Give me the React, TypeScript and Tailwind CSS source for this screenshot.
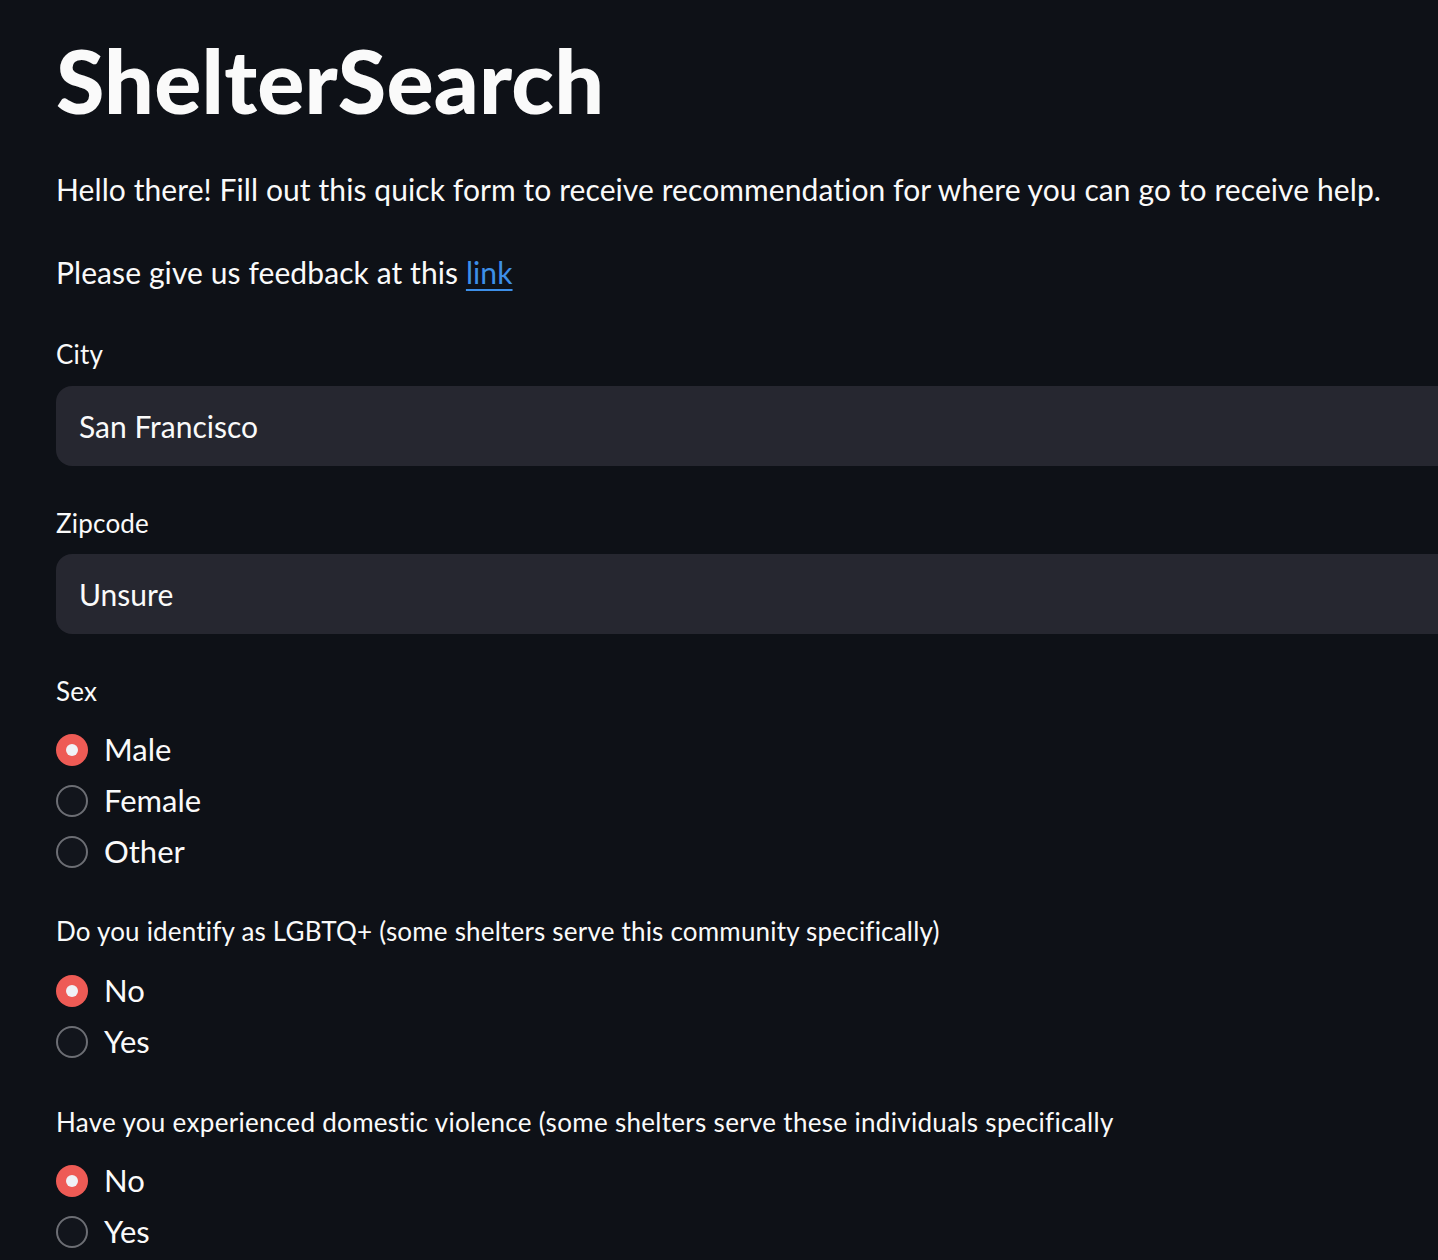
import React from "react";

const font = { fontFamily: "Lato, 'Noto Sans', sans-serif" };

function Radio({ label, checked }: { label: string; checked?: boolean }) {
  return (
    <div className="flex h-[51px] items-center">
      {checked ? (
        <div className="flex h-[32px] w-[32px] items-center justify-center rounded-full bg-[#ee5b55]">
          <div className="h-[12px] w-[12px] rounded-full bg-[#f0f2f6]" />
        </div>
      ) : (
        <div className="h-[32px] w-[32px] rounded-full border-2 border-[#6c6e74] bg-[#12151c]" />
      )}
      <span className="ml-[16px] text-[31px] leading-none text-[#fafafa]">{label}</span>
    </div>
  );
}

function Label({ children, className = "" }: { children: React.ReactNode; className?: string }) {
  return (
    <div className={`flex h-[36px] items-center text-[26px] leading-none text-[#fafafa] ${className}`}>{children}</div>
  );
}

function Input({ value, className = "" }: { value: string; className?: string }) {
  return (
    <div className={`-mr-[40px] flex h-[80px] items-center rounded-[16px] bg-[#262730] pl-[23px] text-[30px] text-[#fafafa] ${className}`}>
      {value}
    </div>
  );
}

export default function App() {
  return (
    <div className="min-h-[1260px] w-full overflow-hidden bg-[#0e1117]" style={font}>
      <div className="pl-[56px] pt-[30px]">
        <h1 className="flex h-[100px] items-center text-[88px] font-black leading-none tracking-[0.2px] text-[#fafafa]">
          ShelterSearch
        </h1>
        <p className="mt-[39px] flex h-[40px] items-center text-[30px] leading-none tracking-[0.09px] text-[#fafafa]">
          Hello there! Fill out this quick form to receive recommendation for where you can go to receive help.
        </p>
        <p className="mt-[43px] flex h-[40px] items-center text-[30px] leading-none tracking-[0.09px] text-[#fafafa]">
          Please give us feedback at this&nbsp;
          <a className="text-[#3d8fe8] underline decoration-2 underline-offset-[5px]">link</a>
        </p>
        <Label className="mt-[44px] tracking-[0.2px]">City</Label>
        <Input value="San Francisco" className="mt-[14px]" />
        <Label className="mt-[39px] tracking-[0.2px]">Zipcode</Label>
        <Input value="Unsure" className="mt-[13px]" />
        <Label className="mt-[39px] tracking-[0.2px]">Sex</Label>
        <div className="mt-[15px]">
          <Radio label="Male" checked />
          <Radio label="Female" />
          <Radio label="Other" />
        </div>
        <Label className="mt-[36px] tracking-[0.2px]">
          Do you identify as LGBTQ+ (some shelters serve this community specifically)
        </Label>
        <div className="mt-[16px]">
          <Radio label="No" checked />
          <Radio label="Yes" />
        </div>
        <Label className="mt-[37px] tracking-[0.31px]">
          Have you experienced domestic violence (some shelters serve these individuals specifically
        </Label>
        <div className="mt-[15px]">
          <Radio label="No" checked />
          <Radio label="Yes" />
        </div>
      </div>
    </div>
  );
}
